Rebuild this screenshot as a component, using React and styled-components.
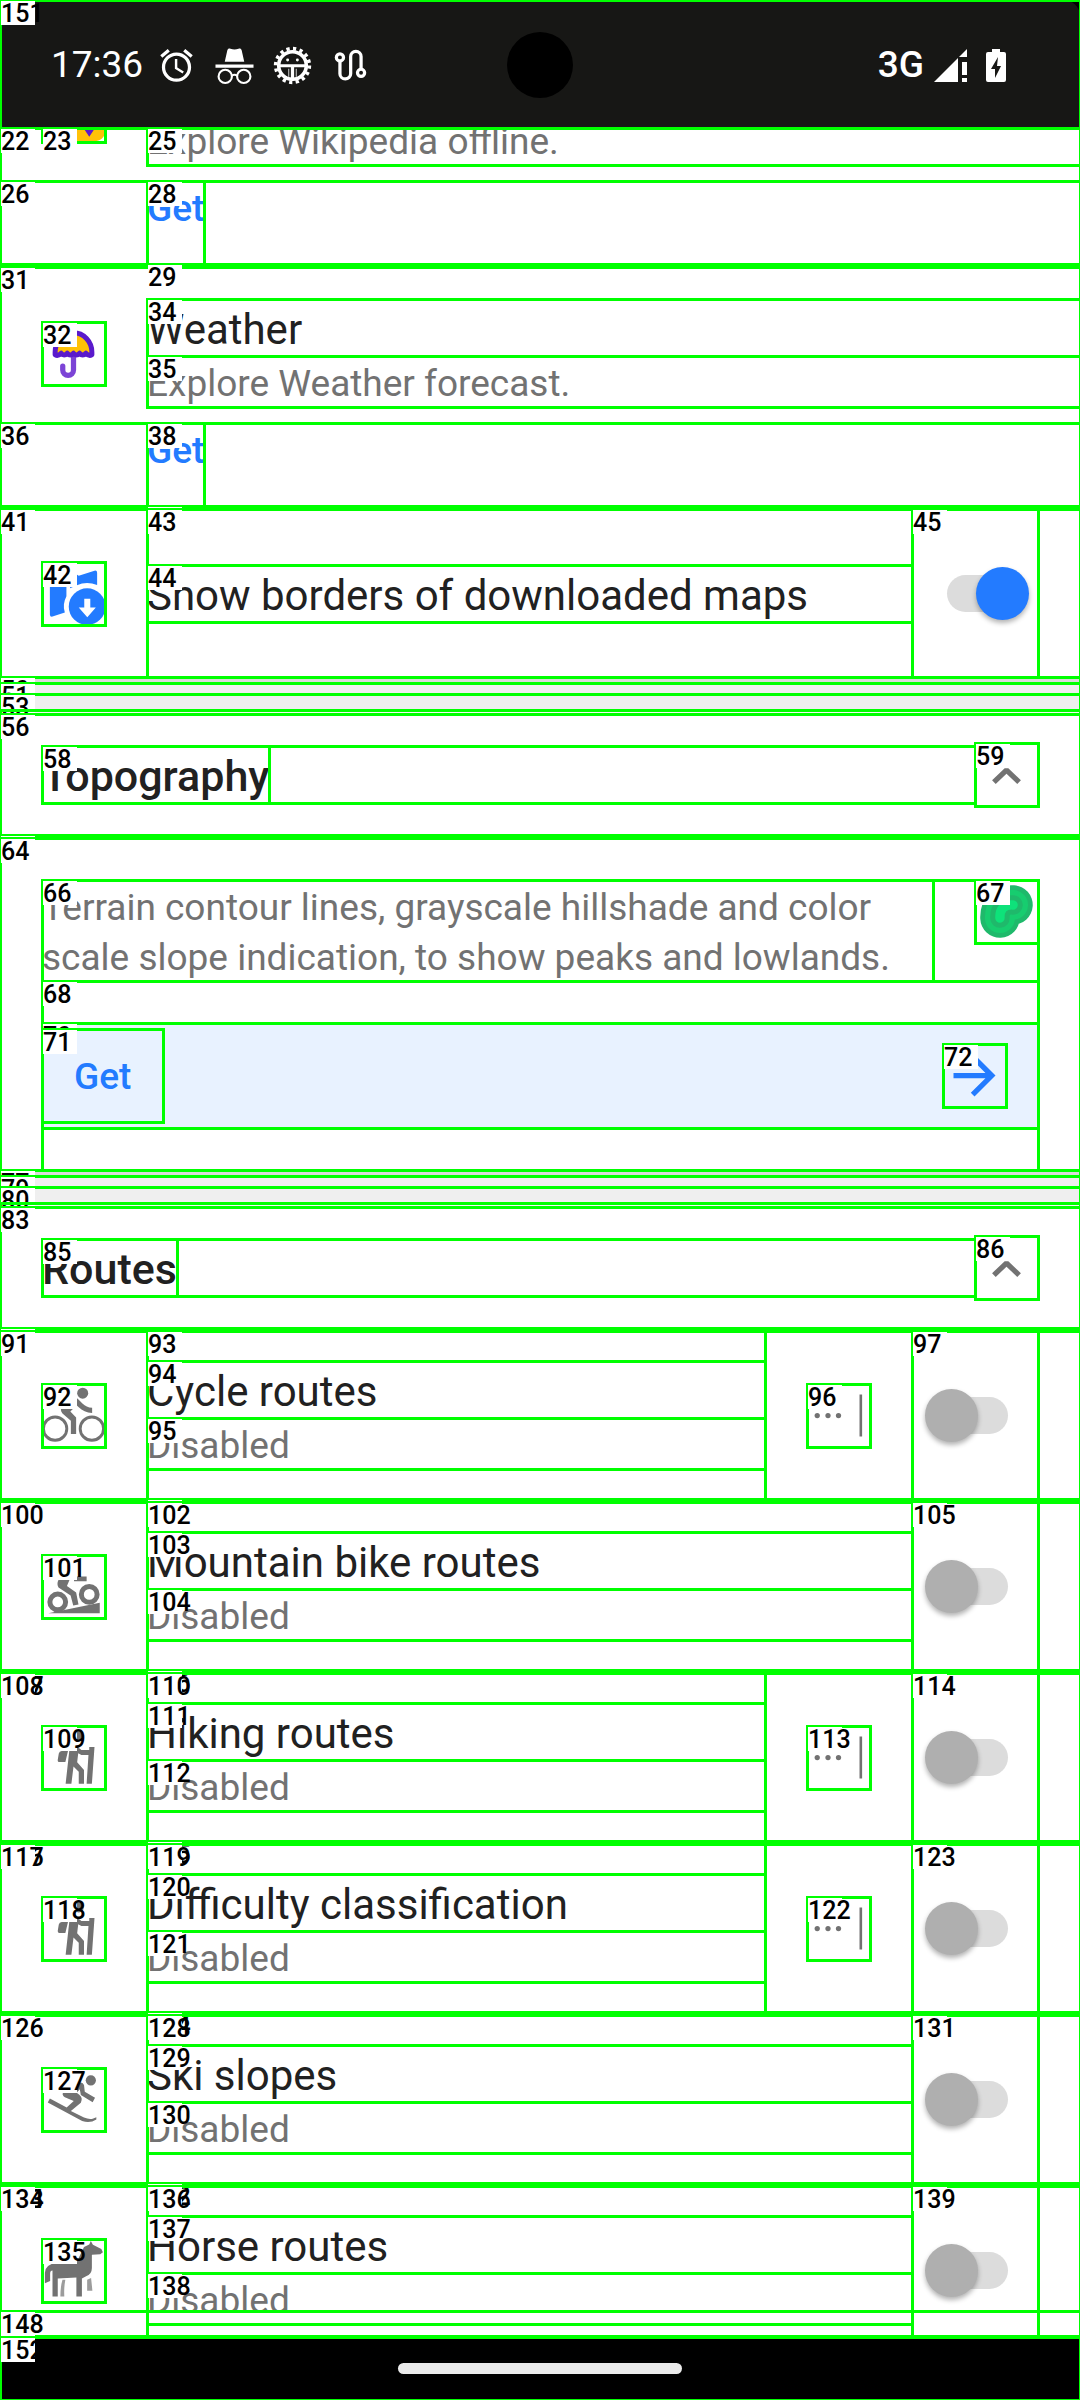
import React from "react";
import styled, { createGlobalStyle, css } from "styled-components";
import { MdAlarm, MdArrowForward } from "react-icons/md";

const GlobalStyle = createGlobalStyle`
  *, *::before, *::after { box-sizing: border-box; }
  body {
    margin: 0;
    background: #000;
    color: #212121;
    font-family: Roboto, "Noto Sans", sans-serif;
  }
  button { font-family: inherit; }
  svg { display: block; flex: none; }
`;

/* Inspector outline: a 3px line centred on the edges of the view. */
const framed = css`
  position: relative;
  &::before {
    content: "";
    position: absolute;
    z-index: 1;
    inset: -1px -2px -2px -1px;
    border: 3px solid #00ff00;
    pointer-events: none;
  }
`;

const Tag = styled.span`
  position: absolute;
  z-index: ${(p) => (p.$raised ? 2 : 1)};
  top: 1px;
  left: 1px;
  width: 34px;
  height: 24px;
  background: #fff;
  color: #000;
  font-size: 25px;
  font-weight: 500;
  line-height: 25px;
  text-align: left;
  white-space: nowrap;
`;

const Screen = styled.div`
  display: flex;
  flex-direction: column;
  height: 100vh;
  overflow: hidden;
`;

const StatusBar = styled.header`
  ${framed}
  display: grid;
  grid-template-columns: 1fr 66px 1fr;
  align-items: center;
  flex: none;
  height: 128px;
  padding: 2px 74px 0 51px;
  background: #171715;
  border-radius: 0 16px 0 0;
  color: #fff;
  font-size: 37px;
  line-height: 44px;
`;

const StatusGroup = styled.div`
  display: flex;
  align-items: center;
  gap: ${(p) => (p.$wide ? "19px" : "14px")};
  justify-content: ${(p) => (p.$end ? "flex-end" : "flex-start")};
`;

const Camera = styled.div`
  width: 66px;
  height: 66px;
  margin-left: 11px;
  border-radius: 50%;
  background: #000;
`;

const Network = styled.div`
  display: flex;
  align-items: center;
  gap: 10px;
  font-weight: 500;
`;

const List = styled.main`
  ${framed}
  flex: 1;
  min-height: 0;
  background: #fff;
`;

const Clip = styled.div`
  height: 100%;
  overflow: hidden;
`;

const Divider = styled.div`
  ${framed}
  height: 3px;
  margin-left: ${(p) => (p.$inset ? "147px" : "0")};
  background: #fff;
`;

const Band = styled.div`
  ${framed}
  height: ${(p) => p.$height}px;
  background: ${(p) => p.$color};
`;

const Row = styled.section`
  ${framed}
  display: flex;
  align-items: center;
  min-height: ${(p) => (p.$compact ? "0" : "168px")};
  padding: ${(p) => (p.$compact ? "32px 0 16px" : "0")};
`;

const TopRow = styled.section`
  ${framed}
  display: flex;
  align-items: flex-start;
  padding-bottom: 16px;
`;

const Cropped = styled.div`
  display: flex;
  align-items: flex-end;
  height: ${(p) => p.$height}px;
  overflow: hidden;
`;

const IconBox = styled.div`
  ${framed}
  flex: none;
  width: 63px;
  margin: 0 42px;
`;

const TextColumn = styled.div`
  flex: 1;
  min-width: 0;
`;

const FramedColumn = styled(TextColumn)`
  ${framed}
  display: flex;
  flex-direction: column;
  justify-content: center;
  align-self: stretch;
`;

const TextBox = styled.div`
  ${framed}
`;

const Title = styled.label`
  display: block;
  height: 57px;
  padding-top: 4px;
  font-size: 42px;
  line-height: 53px;
  white-space: nowrap;
`;

const Note = styled.p`
  margin: 0;
  height: 51px;
  padding-top: 4px;
  color: #727272;
  font-size: 37px;
  line-height: 47px;
  white-space: nowrap;
`;

const ActionRow = styled.div`
  ${framed}
  display: flex;
  height: 83px;
  padding-left: 147px;
`;

const TextButton = styled.button`
  ${framed}
  display: flex;
  align-items: flex-start;
  padding: 6px 0 0;
  border: 0;
  background: none;
  color: #237bff;
  font-size: 37px;
  font-weight: 500;
  line-height: 43px;
`;

const SwitchColumn = styled.div`
  ${framed}
  display: flex;
  align-items: center;
  align-self: stretch;
  justify-content: flex-end;
  flex: none;
  width: 126px;
  margin-right: 42px;
  padding-right: 9px;
`;

const Switch = styled.input`
  appearance: none;
  display: grid;
  align-items: center;
  width: 104px;
  height: 53px;
  margin: 0;
  &::before,
  &::after {
    content: "";
    grid-area: 1 / 1;
  }
  &::before {
    justify-self: center;
    width: 61px;
    height: 37px;
    border-radius: 19px;
    background: #dcdcdc;
  }
  &::after {
    justify-self: start;
    width: 53px;
    height: 53px;
    border-radius: 50%;
    background: #afafaf;
    box-shadow: 0 3px 5px rgba(0, 0, 0, 0.3);
  }
  &:checked::after {
    justify-self: end;
    background: #237bff;
  }
`;

const Heading = styled.section`
  ${framed}
  display: flex;
  align-items: center;
  height: 121px;
  padding: 0 42px;
`;

const HeadingLine = styled.div`
  ${framed}
  display: flex;
  flex: 1;
`;

const HeadingText = styled.h2`
  margin: 0;
  height: 57px;
  padding-top: 4px;
  font-size: 43px;
  font-weight: 500;
  line-height: 53px;
`;

const IconButton = styled.button`
  ${framed}
  flex: none;
  width: 63px;
  height: 63px;
  padding: 0;
  border: 0;
  background: none;
  color: ${(p) => (p.$accent ? "#237bff" : "#727272")};
`;

const Promo = styled.section`
  ${framed}
  padding: 42px 42px 0;
`;

const PromoIntro = styled.div`
  ${framed}
  display: flex;
  justify-content: space-between;
  align-items: flex-start;
  gap: 42px;
`;

const PromoText = styled.div`
  ${framed}
  flex: 1;
  p {
    margin: 0;
    height: 101px;
    padding-top: 3px;
    color: #727272;
    font-size: 37px;
    line-height: 50px;
  }
`;

const PromoIcon = styled.div`
  ${framed}
  width: 63px;
`;

const PromoActions = styled.div`
  ${framed}
  padding: 42px 0;
`;

const PromoBar = styled.div`
  ${framed}
  display: flex;
  align-items: center;
  justify-content: space-between;
  height: 105px;
  padding-right: 32px;
  border-radius: 5px;
  background: #e8f2ff;
`;

const PromoButton = styled(TextButton)`
  align-items: center;
  height: 93px;
  padding: 2px 32px 0;
`;

const BottomPanel = styled.div`
  ${framed}
  position: absolute;
  left: 0;
  right: 0;
  bottom: 1px;
  height: 25px;
`;

const NavBar = styled.footer`
  ${framed}
  display: flex;
  justify-content: center;
  flex: none;
  height: 63px;
  padding-top: 26px;
  background: #000;
`;

const Pill = styled.div`
  width: 284px;
  height: 11px;
  border-radius: 6px;
  background: #ebebeb;
`;

const Mark = ({ id, raised }) => (
  <Tag aria-hidden="true" $raised={raised}>
    {id}
  </Tag>
);

const Glyph = ({ size = 63, children, color = "#727272" }) => (
  <svg width={size} height={size} viewBox="0 0 24 24" fill={color} aria-hidden="true">
    {children}
  </svg>
);

const Incognito = () => (
  <Glyph size={39} color="#fff">
    <path d="M7.6 2.6c.3-.9 1-1.2 1.9-.9 1.7.6 3.3.6 5 0 .9-.3 1.6 0 1.9.9L18 9.7H6z" />
    <path d="M.3 11.4h23.400v2H.3z" />
    <g fill="none" stroke="#fff" strokeWidth="1.300">
      <circle cx="6.300" cy="18.700" r="4.100" />
      <circle cx="17.700" cy="18.700" r="4.100" />
      <path d="M10.300 18.300q1.700-1.200 3.400 0" />
    </g>
  </Glyph>
);

const Debugger = () => (
  <Glyph size={39} color="#fff">
    <circle cx="12" cy="12" r="10.400" fill="none" stroke="#fff" strokeWidth="2.200" strokeDasharray="2 2.084" />
    <circle cx="12" cy="12" r="8.500" fill="none" stroke="#fff" strokeWidth="2.200" />
    <path d="M4 11.200h16v1.900H4zM11 12h2v9h-2z" />
    <circle cx="9" cy="8.600" r=".9" />
    <circle cx="15" cy="8.600" r=".9" />
    <path d="M9.700 14v5M14.300 14v5" stroke="#fff" strokeWidth=".5" />
  </Glyph>
);

const RouteGlyph = () => (
  <Glyph size={39} color="none">
    <g stroke="#fff" strokeWidth="2">
      <circle cx="5.500" cy="7" r="2.200" />
      <circle cx="18.500" cy="16.500" r="2.200" />
      <path d="M5.500 9.200V17a3.300 3.300 0 0 0 6.600 0V6.500a3.200 3.200 0 0 1 6.400 0v7.800" />
    </g>
  </Glyph>
);

const Signal = () => (
  <svg width="33" height="33" viewBox="0 0 33 33" fill="#fff" aria-hidden="true">
    <path d="M0 33L24 9v24zM25 8l8-8v8zM28 13h5v13h-5zM28 29h5v4h-5z" />
  </svg>
);

const Battery = () => (
  <svg width="20" height="33" viewBox="0 0 20 33" aria-hidden="true">
    <path d="M6 0h8v3h4q2 0 2 2v26q0 2-2 2H2q-2 0-2-2V5q0-2 2-2h4z" fill="#fff" />
    <path d="M12 8L5 20h4v9l6-12h-4z" fill="#171715" />
  </svg>
);

const Wikipedia = () => (
  <Glyph>
    <path d="M2 2h22v18c0 2.400-2 3.700-4 3.700H6c-2 0-4-1.500-4-3.700z" fill="#ffc107" />
    <path d="M14 16h8l-4 6z" fill="#5a1acc" />
  </Glyph>
);

const Umbrella = () => (
  <Glyph>
    <path d="M12 12v6.300a2.050 2.050 0 0 1-4.100 0V16.800" fill="none" stroke="#7c44d6" strokeWidth="2" strokeLinecap="round" />
    <path
      d="M5 11.500a7 7.400 0 0 1 14 0v1q-1.200.6-2.300-.6-1.200 1.300-2.400 0-1.200 1.300-2.300 0-1.200 1.300-2.400 0-1.200 1.300-2.300 0-1.100 1.200-2.300.6z"
      fill="#ffc107"
      stroke="#5a1acc"
      strokeWidth="1.900"
      strokeLinejoin="round"
    />
  </Glyph>
);

const MapDownload = () => (
  <Glyph color="#237bff">
    <path d="M3 5.200L9.300 3v10c-1 2-1.300 4-.6 6.200L4 20.800q-1 .2-1-.8z" />
    <path d="M10.700 3.200L14 5.200l6-1.900q1-.2 1 .8v4.700q-4-1.600-7.700.1L10.700 10z" />
    <circle cx="17.200" cy="17" r="7" />
    <path d="M16.100 14h2.300v3.300h2.100L17.250 21 14 17.300h2.100z" fill="#fff" />
  </Glyph>
);

const contour = "M9.500 14.500Q9.300 9.200 14.500 9.500";

const Terrain = () => (
  <Glyph color="none">
    <g strokeLinecap="round">
      <path d={contour} stroke="#1fb96b" strokeWidth="15" />
      <path d={contour} stroke="#17cd6f" strokeWidth="11.400" />
      <path d={contour} stroke="#1fb96b" strokeWidth="7.400" />
      <path d={contour} stroke="#0ee27a" strokeWidth="3.600" />
    </g>
  </Glyph>
);

const Chevron = () => (
  <Glyph color="none">
    <path d="M7.200 14.900L12 10.300l4.800 4.600" stroke="#727272" strokeWidth="2" strokeLinejoin="bevel" />
  </Glyph>
);

const More = () => (
  <Glyph>
    <circle cx="3.900" cy="12" r="1" />
    <circle cx="8" cy="12" r="1" />
    <circle cx="12" cy="12" r="1" />
    <path d="M20 4h1v16h-1z" />
  </Glyph>
);

const Bike = () => (
  <Glyph>
    <circle cx="15.500" cy="3.500" r="2.100" />
    <g fill="none" stroke="#727272" strokeWidth="1.100">
      <circle cx="5" cy="17" r="4.450" />
      <circle cx="19" cy="17" r="4.450" />
    </g>
    <path d="M10.800 10.500l2.400-2.400.8.8c1.300 1.300 3 2.100 5.100 2.100V9c-1.500 0-2.700-.6-3.600-1.500l-1.900-1.900c-.9-.8-2.200-.8-3 0L7.800 8.400c-.8.8-.8 2 0 2.800L11 14v5h2v-6.200z" />
  </Glyph>
);

const MountainBike = () => (
  <Glyph>
    <g fill="none" stroke="#727272" strokeWidth="1.900">
      <circle cx="6" cy="17.900" r="3" />
      <circle cx="18" cy="15" r="3" />
    </g>
    <path d="M2.400 22.200L22 18.200v4zM6.300 9.400h4.200l-1 2.400 3.500 2.500.9 4.600-2 .3-1-3.800-4.600-3Q5.500 11 6.300 9.400zM12.200 8.200H17v1.800h-4.800z" />
  </Glyph>
);

const Hiker = () => (
  <Glyph>
    <circle cx="14" cy="4" r="1.900" />
    <path d="M7.500 9.500h2.400l-1 4.200H6.500q-.6 0-.5-.8l.4-2.400q.2-1 1.100-1zM10.500 8.500L13 7.500l2 1.600h3V8h2l-1 14h-2l.7-11H15l-1.200-.6-.4 3.400 2.600 3V22h-2v-4.600l-2-2L11.200 22H9z" />
  </Glyph>
);

const Skier = () => (
  <Glyph>
    <circle cx="18.600" cy="4.700" r="1.950" />
    <path d="M8 9.400h1.800L13 6.500q2.200-2 3 0l.3 2.500 3.900 2.300-.9 1.700-4.500-2.700-.4-2.200-1.200 1.300 1 .8q1.500 1.200.6 3l-3.800 3.200 5 2.500q2 .8 3.300.4l1.400-.5v.8q-2.400 1.600-5.400.6L2.200 13.100l.8-1.500 6.400 3.400 2.700-2.400-3.400-1.500Q7.500 10.300 8 9.400z" />
  </Glyph>
);

const Horse = () => (
  <Glyph>
    <path d="M7.800 15.500h1.100q-.6 3-.4 6.400H7q0-3.700.8-6.400zM17.200 15.500l1.500-.6.5 4.800h-2z" fill="#9c9c9c" />
    <path d="M5.500 9.200H13l3-6.200 2-.9L18.600.8l.8 1.400 3.200 1.600.6 1.200-1 .8-3.200.2v5q0 2.400-2.200 3.200L15.200 15v6.900h-2.100V14.700L6 15v6.900H4V12q-.9 0-.9 1.200V16l-2 .9v-4q.2-3.500 4.400-3.700z" />
  </Glyph>
);

const Separator = ({ ids }) => (
  <>
    <Band $height={6} $color="#dadada"><Mark id={ids[0]} /></Band>
    <Band $height={11} $color="#efefef"><Mark id={ids[1]} /></Band>
    <Band $height={16} $color="#efefef"><Mark id={ids[2]} /></Band>
    <Band $height={4} $color="#f4f4f4" />
  </>
);

const SectionHeading = ({ text, ids }) => (
  <Heading>
    <Mark id={ids[0]} />
    <HeadingLine>
      <TextBox>
        <Mark id={ids[1]} />
        <HeadingText>{text}</HeadingText>
      </TextBox>
    </HeadingLine>
    <IconButton aria-label={`Collapse ${text}`}>
      <Mark id={ids[2]} />
      <Chevron />
    </IconButton>
  </Heading>
);

const OptionRow = ({ name, note, icon: Icon, ids, checked, more }) => {
  const inputId = `switch-${ids.toggle}`;
  return (
    <Row>
      {ids.row.map((id) => <Mark key={id} id={id} />)}
      <IconBox>
        <Mark id={ids.icon} />
        <Icon />
      </IconBox>
      <FramedColumn>
        <Mark id={ids.column} />
        <TextBox>
          <Mark id={ids.title} />
          <Title htmlFor={inputId}>{name}</Title>
        </TextBox>
        {note && (
          <TextBox>
            <Mark id={ids.note} />
            <Note>{note}</Note>
          </TextBox>
        )}
      </FramedColumn>
      {more && (
        <IconBox>
          <Mark id={more} />
          <More />
        </IconBox>
      )}
      <SwitchColumn>
        <Mark id={ids.toggle} />
        <Switch id={inputId} type="checkbox" defaultChecked={checked} />
      </SwitchColumn>
    </Row>
  );
};

const GetRow = ({ ids }) => (
  <ActionRow>
    <Mark id={ids[0]} />
    <TextButton>
      <Mark id={ids[1]} />
      Get
    </TextButton>
  </ActionRow>
);

const routes = [
  { name: "Cycle routes", icon: Bike, more: 96, ids: { row: [91], icon: 92, column: 93, title: 94, note: 95, toggle: 97 } },
  { name: "Mountain bike routes", icon: MountainBike, divider: 98, ids: { row: [100], icon: 101, column: 102, title: 103, note: 104, toggle: 105 } },
  { name: "Hiking routes", icon: Hiker, divider: 106, more: 113, ids: { row: [107, 108], icon: 109, column: 110, title: 111, note: 112, toggle: 114 } },
  { name: "Difficulty classification", icon: Hiker, divider: 115, more: 122, ids: { row: [116, 117], icon: 118, column: 119, title: 120, note: 121, toggle: 123 } },
  { name: "Ski slopes", icon: Skier, divider: 124, ids: { row: [126], icon: 127, column: 128, title: 129, note: 130, toggle: 131 } },
  { name: "Horse routes", icon: Horse, divider: 132, ids: { row: [133, 134], icon: 135, column: 136, title: 137, note: 138, toggle: 139 } },
];

export default function App() {
  return (
    <Screen>
      <GlobalStyle />
      <StatusBar>
        <Mark id={151} />
        <StatusGroup>
          <span>17:36</span>
          <StatusGroup $wide>
            <MdAlarm size={39} />
            <Incognito />
            <Debugger />
            <RouteGlyph />
          </StatusGroup>
        </StatusGroup>
        <Camera />
        <StatusGroup $wide $end>
          <Network>
            3G
            <Signal />
          </Network>
          <Battery />
        </StatusGroup>
      </StatusBar>

      <List>
        <Clip>
          <TopRow>
            <Mark id={22} />
            <IconBox>
              <Mark id={23} />
              <Cropped $height={14}><Wikipedia /></Cropped>
            </IconBox>
            <FramedColumn>
              <Mark id={25} />
              <Cropped $height={37}><Note>Explore Wikipedia offline.</Note></Cropped>
            </FramedColumn>
          </TopRow>
          <GetRow ids={[26, 28]} />
          <Divider $inset><Mark id={29} raised /></Divider>

          <Row $compact>
            <Mark id={31} />
            <IconBox>
              <Mark id={32} />
              <Umbrella />
            </IconBox>
            <TextColumn>
              <TextBox>
                <Mark id={34} />
                <Title as="div">Weather</Title>
              </TextBox>
              <TextBox>
                <Mark id={35} />
                <Note>Explore Weather forecast.</Note>
              </TextBox>
            </TextColumn>
          </Row>
          <GetRow ids={[36, 38]} />
          <Divider $inset><Mark id={39} /></Divider>

          <OptionRow
            name="Show borders of downloaded maps"
            icon={MapDownload}
            checked
            ids={{ row: [41], icon: 42, column: 43, title: 44, toggle: 45 }}
          />

          <Separator ids={[50, 51, 53]} />
          <SectionHeading text="Topography" ids={[56, 58, 59]} />
          <Divider><Mark id={62} /></Divider>
          <Promo>
            <Mark id={64} />
            <PromoIntro>
              <PromoText>
                <Mark id={66} />
                <p>Terrain contour lines, grayscale hillshade and color scale slope indication, to show peaks and lowlands.</p>
              </PromoText>
              <PromoIcon>
                <Mark id={67} />
                <Terrain />
              </PromoIcon>
            </PromoIntro>
            <PromoActions>
              <Mark id={68} />
              <PromoBar>
                <Mark id={70} />
                <PromoButton>
                  <Mark id={71} />
                  Get
                </PromoButton>
                <IconButton $accent aria-label="Open">
                  <Mark id={72} />
                  <MdArrowForward size={63} />
                </IconButton>
              </PromoBar>
            </PromoActions>
          </Promo>

          <Separator ids={[77, 79, 80]} />
          <SectionHeading text="Routes" ids={[83, 85, 86]} />
          <Divider><Mark id={89} /></Divider>
          {routes.map((route) => (
            <React.Fragment key={route.name}>
              {route.divider && <Divider $inset><Mark id={route.divider} /></Divider>}
              <OptionRow {...route} note="Disabled" />
            </React.Fragment>
          ))}
        </Clip>
        <BottomPanel><Mark id={148} /></BottomPanel>
      </List>

      <NavBar>
        <Mark id={152} />
        <Pill />
      </NavBar>
    </Screen>
  );
}
